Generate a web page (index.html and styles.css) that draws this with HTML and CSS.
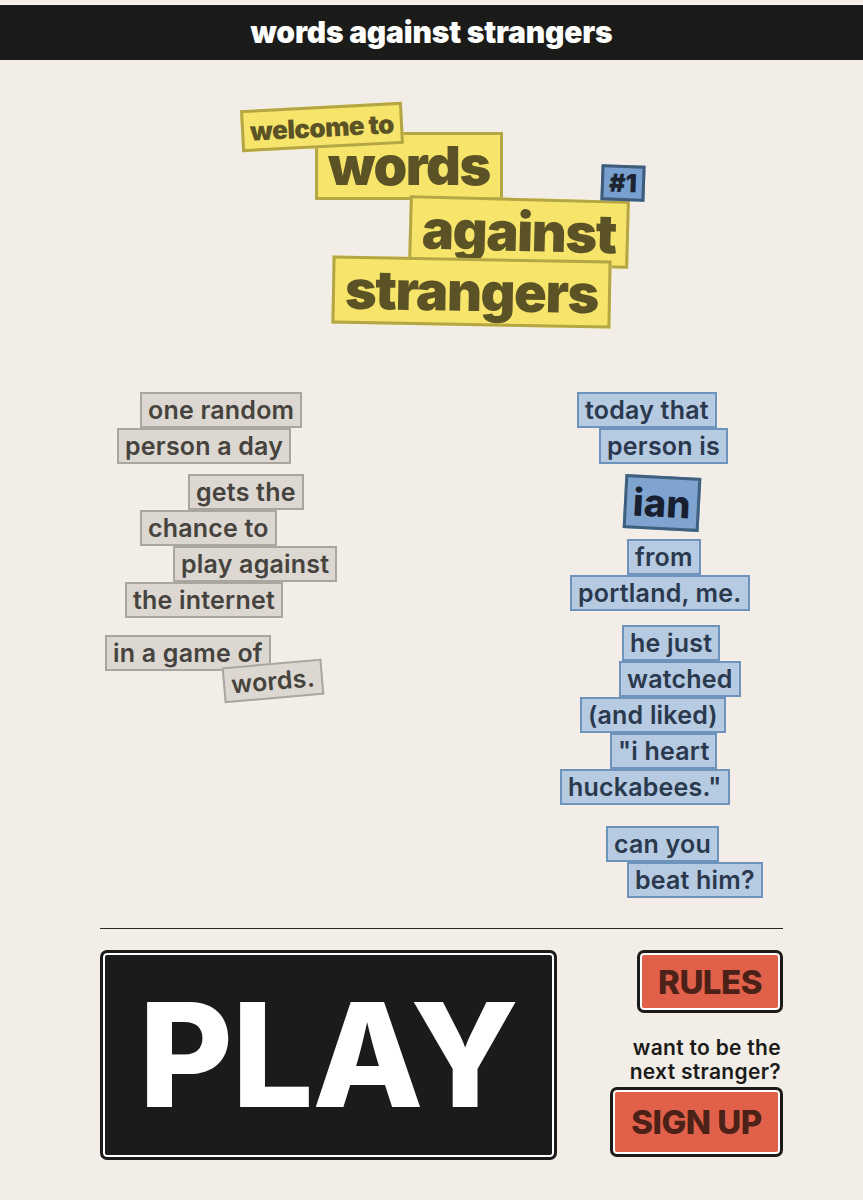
FILE: index.html
```html
<!DOCTYPE html>
<html lang="en">
  <head>
    <meta charset="UTF-8" />
    <meta name="viewport" content="width=device-width, initial-scale=1.0" />
    <title>words against strangers</title>
    <link rel="stylesheet" href="styles.css">
  </head>
  <body>
    <header class="topbar">words against strangers</header>

    <main class="page">
      <!-- big title, stacked stickers -->
      <div class="title">
        <span class="sticker welcome">welcome to</span>
        <span class="sticker big t-words">words</span>
        <span class="sticker big t-against">against</span>
        <span class="sticker big t-strangers">strangers</span>
        <span class="issue">#1</span>
      </div>

      <div class="columns">
        <div class="col left">
          <span class="tile">one random</span>
          <span class="tile">person a day</span>
          <span class="tile gap">gets the</span>
          <span class="tile">chance to</span>
          <span class="tile">play against</span>
          <span class="tile">the internet</span>
          <span class="tile gap">in a game of</span>
          <span class="tile tilted">words.</span>
        </div>

        <div class="col right">
          <span class="tile">today that</span>
          <span class="tile">person is</span>
          <span class="tile name">ian</span>
          <span class="tile">from</span>
          <span class="tile">portland, me.</span>
          <span class="tile gap">he just</span>
          <span class="tile">watched</span>
          <span class="tile">(and liked)</span>
          <span class="tile">"i heart</span>
          <span class="tile">huckabees."</span>
          <span class="tile gap">can you</span>
          <span class="tile">beat him?</span>
        </div>
      </div>

      <hr class="divider" />

      <div class="actions">
        <button class="btn play" type="button">PLAY</button>
        <div class="side">
          <button class="btn red rules" type="button">RULES</button>
          <p class="invite">want to be the<br />next stranger?</p>
          <button class="btn red signup" type="button">SIGN UP</button>
        </div>
      </div>
    </main>
  </body>
</html>
```

FILE: styles.css
```css
* {
  box-sizing: border-box;
}
body {
  margin: 0;
  background-color: #f2ede6;
  font-family: Inter, "Noto Sans", sans-serif;
}

.topbar {
  margin-top: 4px;
  border-top: 1px solid #fbf8f4;
  height: 56px;
  background-color: #1b1b19;
  color: #fff;
  font-size: 30px;
  font-weight: 900;
  letter-spacing: -0.2px;
  text-align: center;
  line-height: 54px;
}

.page {
  width: 783px;
  padding-left: 100px;
}

/* title stickers */
.title {
  position: relative;
  display: flex;
  flex-direction: column;
  align-items: flex-start;
  padding-top: 46px;
  height: 332px;
}
.sticker {
  display: block;
  background-color: #f6e46b;
  border: 3px solid #b4a645;
  color: #5b5326;
  font-weight: 900;
}
.welcome {
  margin-left: 141px;
  padding: 2px 6px 0;
  font-size: 26px;
  line-height: 34px;
  letter-spacing: -0.6px;
  transform: rotate(-3deg);
}
.big {
  font-size: 54px;
  line-height: 62px;
  letter-spacing: -1.4px;
  padding: 0 10px;
}
.t-words {
  margin-left: 215px;
  margin-top: -16px;
}
.t-against {
  margin-left: 309px;
  margin-top: -2px;
  transform: rotate(1.5deg);
}
.t-strangers {
  margin-left: 232px;
  margin-top: -8px;
  transform: rotate(1deg);
}
.issue {
  position: absolute;
  left: 501px;
  top: 105px;
  padding: 0 5px;
  background-color: #779fcf;
  border: 3px solid #405c7b;
  color: #1c2431;
  font-size: 25px;
  font-weight: 900;
  line-height: 30px;
  transform: rotate(2deg);
}

/* word columns */
.columns {
  display: grid;
  grid-template-columns: 460px 1fr;
}
.col {
  display: flex;
  flex-direction: column;
  align-items: flex-start;
}
.tile {
  display: block;
  padding: 0 6px;
  border: 2px solid;
  font-size: 25px;
  font-weight: 600;
  line-height: 32px;
  letter-spacing: 0.2px;
}
.gap {
  margin-top: 10px;
}

.left {
  padding-left: 5px;
}
.left .tile {
  background-color: #dcd8d1;
  border-color: #a9a59f;
  color: #46433f;
}
.left .tile:nth-child(1) { margin-left: 35px; }
.left .tile:nth-child(2) { margin-left: 12px; }
.left .tile:nth-child(3) { margin-left: 83px; }
.left .tile:nth-child(4) { margin-left: 35px; }
.left .tile:nth-child(5) { margin-left: 68px; }
.left .tile:nth-child(6) { margin-left: 20px; }
.left .tile:nth-child(7) { margin-left: 0; margin-top: 17px; }
.left .tilted {
  margin-left: 118px;
  margin-top: -8px;
  transform: rotate(-5deg);
}

.right .tile {
  background-color: #b6cae2;
  border-color: #6e94bd;
  color: #2a394d;
}
.right .tile:nth-child(1) { margin-left: 17px; }
.right .tile:nth-child(2) { margin-left: 39px; }
.right .tile:nth-child(4) { margin-left: 67px; margin-top: 9px; }
.right .tile:nth-child(5) { margin-left: 10px; }
.right .tile:nth-child(6) { margin-left: 62px; margin-top: 14px; }
.right .tile:nth-child(7) { margin-left: 59px; }
.right .tile:nth-child(8) { margin-left: 20px; }
.right .tile:nth-child(9) { margin-left: 50px; }
.right .tile:nth-child(10) { margin-left: 0; }
.right .tile:nth-child(11) { margin-left: 46px; margin-top: 21px; }
.right .tile:nth-child(12) { margin-left: 67px; }
.right .name {
  margin-left: 64px;
  margin-top: 12px;
  padding: 2px 6px;
  background-color: #7ea4cf;
  border: 3px solid #40607f;
  color: #182030;
  font-size: 38px;
  font-weight: 800;
  line-height: 44px;
  transform: rotate(3deg);
}

.divider {
  margin: 30px 0 0;
  border: 0;
  border-top: 1.5px solid #2a2826;
}

/* buttons */
.actions {
  display: flex;
  justify-content: space-between;
  padding-top: 21px;
}
.btn {
  border: 3px solid #1b1b19;
  border-radius: 7px;
  box-shadow: inset 0 0 0 2px #fff;
  font-family: Inter, sans-serif;
  font-weight: 900;
  padding: 0;
  cursor: pointer;
}
.play {
  width: 457px;
  height: 210px;
  background-color: #1b1b19;
  color: #fff;
  font-size: 144px;
  font-weight: 800;
  letter-spacing: -1px;
  line-height: 1;
}
.side {
  width: 173px;
  display: flex;
  flex-direction: column;
  align-items: flex-end;
}
.red {
  background-color: #e1604a;
  color: #4c2117;
  font-size: 33px;
  font-weight: 800;
  letter-spacing: -0.5px;
}
.rules {
  width: 146px;
  height: 63px;
}
.invite {
  margin: 23px 2px 0 0;
  text-align: right;
  font-size: 21px;
  font-weight: 600;
  line-height: 24px;
  letter-spacing: 0.3px;
  color: #1b1b19;
}
.signup {
  margin-top: 3px;
  width: 173px;
  height: 70px;
}
```
